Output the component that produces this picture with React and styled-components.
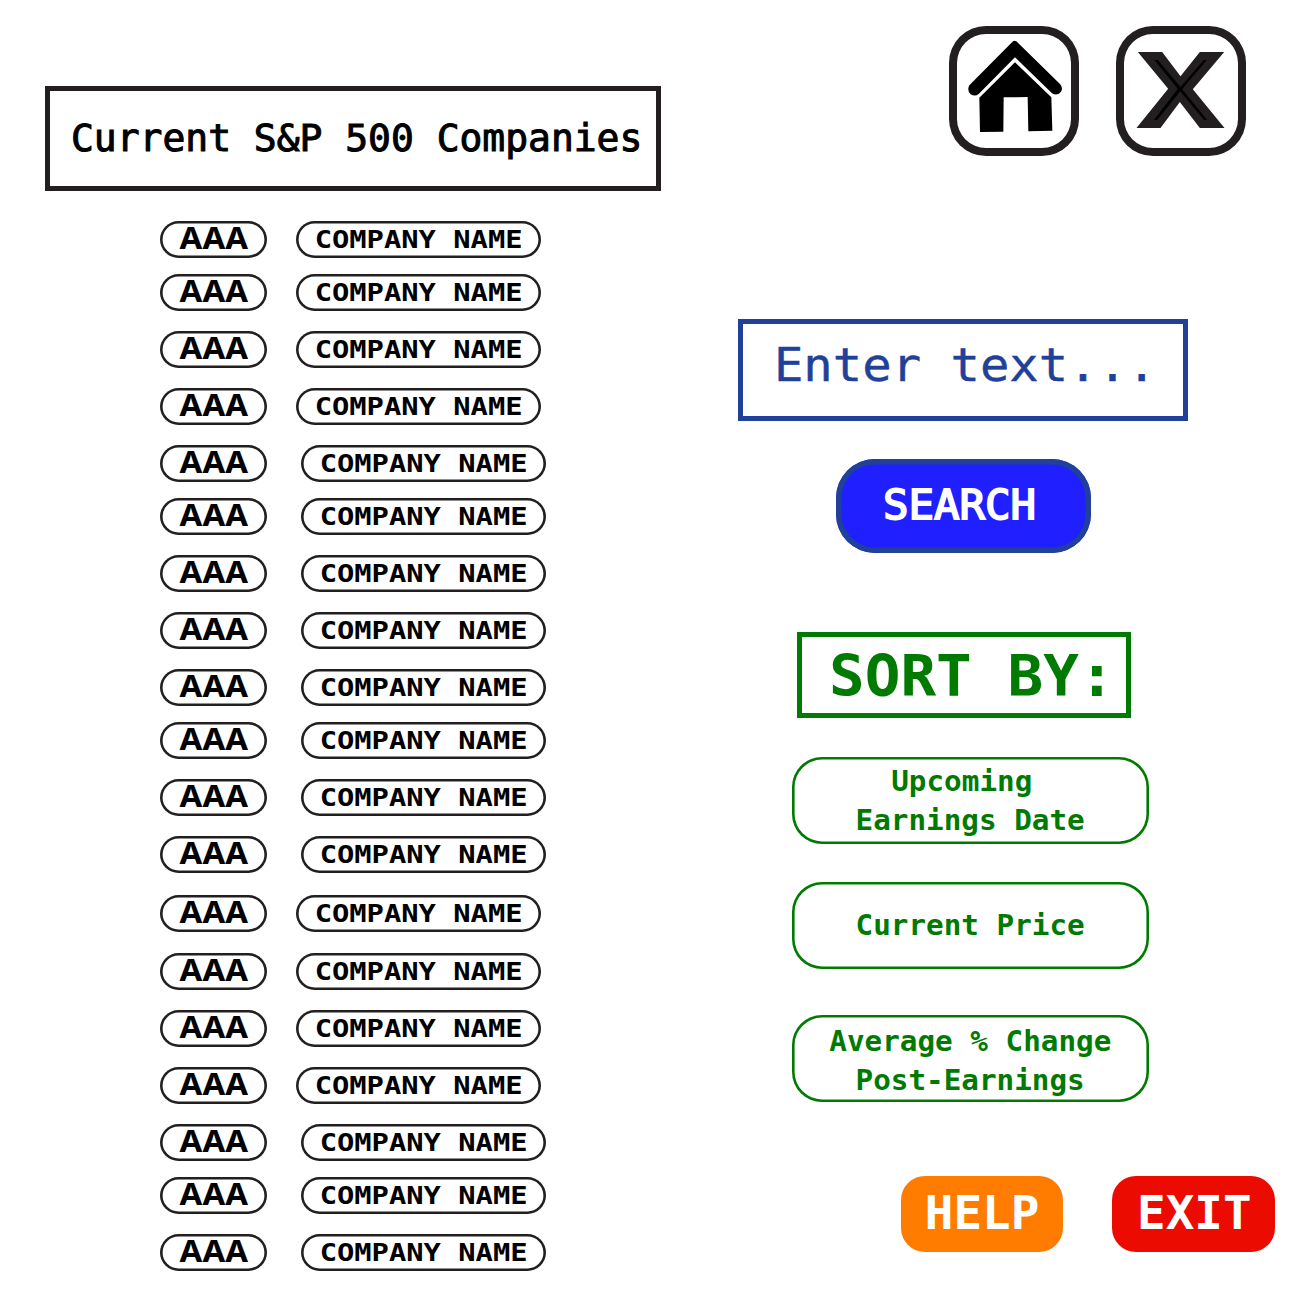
import React from "react";
import styled, { createGlobalStyle } from "styled-components";

const GlobalStyle = createGlobalStyle`
  * { box-sizing: border-box; }
  body { margin: 0; background: #fff; }
  button { appearance: none; background: none; border: 0; margin: 0; padding: 0; font: inherit; cursor: pointer; }
`;

const Page = styled.main`
  display: flex;
  width: 1313px;
  height: 1289px;
  overflow: hidden;
  background: #fff;
  font-family: "DejaVu Sans Mono", monospace;
`;

const ListColumn = styled.section`
  width: 738px;
  padding: 86px 0 0 45px;
`;

const SideColumn = styled.aside`
  flex: 1;
  display: flex;
  flex-direction: column;
  padding-top: 26px;
`;

const Label = styled.span`
  flex: none;
  display: block;
  white-space: pre;
  text-align: center;
  line-height: ${(p) => p.$line || 1};
  font-family: ${(p) => p.$family || "inherit"};
  font-size: ${(p) => p.$size}px;
  font-weight: ${(p) => (p.$bold ? 700 : 400)};
  -webkit-text-stroke: ${(p) => p.$stroke || 0}px currentColor;
  transform: translate(${(p) => p.$dx || 0}px, ${(p) => p.$dy || 0}px) scaleX(${(p) => p.$stretch || 1});
`;

const Frame = styled.div`
  display: flex;
  align-items: center;
  justify-content: center;
  width: ${(p) => p.$w}px;
  height: ${(p) => p.$h}px;
  border: 5px solid currentColor;
  color: ${(p) => p.$color};
`;

const Title = styled.h1`
  margin: 0;
  display: flex;
  color: #000;
  font-weight: inherit;
`;

const CompanyList = styled.ul`
  list-style: none;
  margin: 30px 0 0;
  padding: 0 0 0 115px;
`;

const CompanyRow = styled.li`
  display: flex;
  gap: ${(p) => (p.$indented ? 34 : 29)}px;
  height: 37px;
  margin-bottom: ${(p) => p.$gap}px;
`;

const Pill = styled.button`
  display: flex;
  align-items: center;
  justify-content: center;
  width: ${(p) => p.$w}px;
  height: 37px;
  border-radius: 18.5px;
  box-shadow: inset 0 0 0 2.6px #231f20;
  color: #000;
`;

const TopBar = styled.nav`
  display: flex;
  gap: 36.5px;
  margin-left: 211px;
`;

const IconButton = styled.button`
  display: flex;
  width: 130px;
  height: 130px;
  border-radius: 37px;
  box-shadow: inset 0 0 0 8px #231f20;
  && { padding: 8px; }
`;

const SearchPanel = styled.div`
  display: flex;
  flex-direction: column;
  align-items: center;
  gap: 38px;
  width: 450px;
  margin-top: 163px;
`;

const SearchButton = styled.button`
  display: flex;
  align-items: center;
  justify-content: center;
  width: 255px;
  height: 94px;
  border-radius: 39px;
  box-shadow: inset 0 0 0 5.5px #21409a;
  && { background: #1f1fff; }
  color: #fff;
`;

const SortPanel = styled.div`
  display: flex;
  flex-direction: column;
  align-items: flex-start;
  margin: 79px 0 0 54px;
`;

const SortTitle = styled.div`
  margin: 0 0 39px 5px;
`;

const SortButton = styled.button`
  display: flex;
  align-items: center;
  justify-content: center;
  flex-direction: column;
  width: 357px;
  height: 87px;
  && { margin-bottom: ${(p) => p.$gap}px; }
  border-radius: 30px;
  box-shadow: inset 0 0 0 2.6px #007a00;
  color: #007a00;
`;

const Footer = styled.footer`
  display: flex;
  gap: 49px;
  margin: 74px 0 0 163px;
`;

const ActionButton = styled.button`
  display: flex;
  align-items: center;
  justify-content: center;
  width: 162.3px;
  height: 76px;
  border-radius: 24px;
  && { background: ${(p) => p.$bg}; }
  color: #fff;
`;

const tops = [
  221, 274, 331, 388, 445, 498, 555, 612, 669, 722, 779, 836, 895, 953, 1010,
  1067, 1124, 1177, 1234,
];

const rows = tops.map((top, i) => ({
  symbol: "AAA",
  name: "COMPANY NAME",
  indented: (i >= 4 && i <= 11) || i >= 16,
  gap: i < tops.length - 1 ? tops[i + 1] - top - 37 : 0,
}));

const sortOptions = [
  { lines: ["Upcoming ", "Earnings Date"], gap: 38, dy: 0 },
  { lines: ["Current Price"], gap: 46, dy: -0.5 },
  { lines: ["Average % Change", "Post-Earnings"], gap: 0, dy: 2 },
];

function HomeIcon() {
  return (
    <svg width="114" height="114" viewBox="51 57 342 342" aria-hidden="true">
      <path d="M219 79 Q224 75 229 79 L360 207 Q370 218 363 230 Q352 244 336 235 L225 127 L116 237 Q105 246 92 238 Q80 226 88 211 Z" />
      <path d="M225 142 L334 247 L337 347 L265 349 L263 246 L191 247 L190 350 L120 351 L118 248 Z" />
    </svg>
  );
}

function CloseIcon() {
  return (
    <svg width="114" height="114" viewBox="550.5 57 342 342" aria-hidden="true">
      <path
        fill="#231f20"
        d="M592 111 H665 L720 184 L778 111 H851 L757 223 L852 339 H778 L718 261 L660 339 H588 L683 221 Z"
      />
      <path
        fill="#000"
        d="M642 135 H652 L720 216 L790 135 H799 L725 223 L800 315 H791 L719 229 L650 315 H640 L712 222 Z"
      />
    </svg>
  );
}

export default function App() {
  return (
    <Page>
      <GlobalStyle />
      <ListColumn>
        <Frame $w={616} $h={105} $color="#231f20">
          <Title>
            <Label $size={36.4} $stretch={1.043} $stroke={1} $dx={3.8} $dy={1.2}>
              Current S&amp;P 500 Companies
            </Label>
          </Title>
        </Frame>
        <CompanyList>
          {rows.map((row, i) => (
            <CompanyRow key={i} $indented={row.indented} $gap={row.gap}>
              <Pill $w={107}>
                <Label $size={31.2} $bold $family='"Noto Sans", sans-serif' $stretch={1.055} $dx={0.4} $dy={-2.3}>
                  {row.symbol}
                </Label>
              </Pill>
              <Pill $w={245}>
                <Label $size={24.4} $bold $stretch={1.18} $dx={0.5} $dy={1.2}>
                  {row.name}
                </Label>
              </Pill>
            </CompanyRow>
          ))}
        </CompanyList>
      </ListColumn>
      <SideColumn>
        <TopBar>
          <IconButton aria-label="Home">
            <HomeIcon />
          </IconButton>
          <IconButton aria-label="Close">
            <CloseIcon />
          </IconButton>
        </TopBar>
        <SearchPanel>
          <Frame $w={450} $h={102} $color="#21409a">
            <Label $size={46.7} $stretch={1.047} $stroke={0.4} $dx={2.5} $dy={-5}>
              Enter text...
            </Label>
          </Frame>
          <SearchButton>
            <Label $size={41} $stretch={1.033} $stroke={1.8} $dx={-3.5} $dy={-1.5}>
              SEARCH
            </Label>
          </SearchButton>
        </SearchPanel>
        <SortPanel>
          <SortTitle>
            <Frame $w={334} $h={86} $color="#007a00">
              <Label $size={56.7} $bold $stretch={1.046} $dx={8.3} $dy={0.5}>
                SORT BY:
              </Label>
            </Frame>
          </SortTitle>
          {sortOptions.map((option) => (
            <SortButton key={option.lines[0]} $gap={option.gap}>
              {option.lines.map((line) => (
                <Label key={line} $size={27.9} $bold $line="39px" $stretch={1.05} $dy={option.dy}>
                  {line}
                </Label>
              ))}
            </SortButton>
          ))}
        </SortPanel>
        <Footer>
          <ActionButton $bg="#ff7c00">
            <Label $size={45.3} $bold $stretch={1.05} $dx={-0.5} $dy={0.3}>
              HELP
            </Label>
          </ActionButton>
          <ActionButton $bg="#ec0b00">
            <Label $size={45.3} $bold $stretch={1.05} $dx={0.8} $dy={0.3}>
              EXIT
            </Label>
          </ActionButton>
        </Footer>
      </SideColumn>
    </Page>
  );
}
